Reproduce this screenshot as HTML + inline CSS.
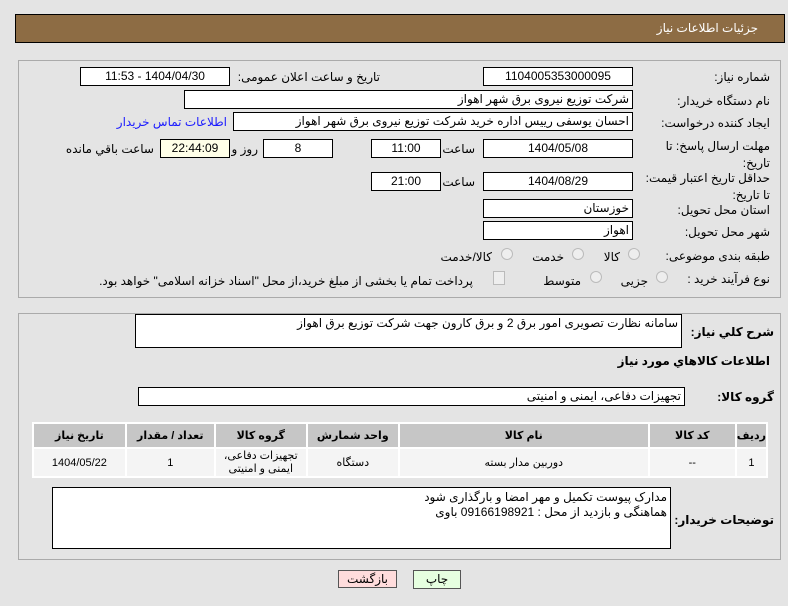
<!DOCTYPE html>
<html><head><meta charset="utf-8"><style>
body{margin:0;width:788px;height:606px;background:#e4e4e4;font-family:"Liberation Sans","DejaVu Sans",sans-serif;font-size:12px;color:#000;position:relative;overflow:hidden;direction:rtl}
.a{position:absolute;white-space:nowrap}
.b{position:absolute;background:#fff;border:1px solid #000;box-sizing:border-box;height:19px;line-height:17px;font-size:12px}
.c{text-align:center}
.r{text-align:right;padding-right:3px}
.l{position:absolute;white-space:nowrap;font-size:12px}
.rad{position:absolute;width:12px;height:12px;border-radius:50%;border:1px solid #bbb;background:#eee;box-sizing:border-box}
table{border-collapse:separate;border-spacing:2px;position:absolute;left:32px;top:422px;width:736px;background:#fff;font-size:11px}
th{background:#c6c6c6;height:23px;font-weight:bold;padding:0}
td{background:#f4f4f4;height:27px;text-align:center;padding:0}
</style></head><body>
<div class="a" style="left:15px;top:14px;width:770px;height:29px;background:#8d6c44;border:1px solid #000;box-sizing:border-box"></div>
<div class="a" style="right:30px;top:21px;color:#fff;font-size:12px">جزئیات اطلاعات نیاز</div>

<div class="a" style="left:18px;top:60px;width:763px;height:238px;border:1px solid #aaa;box-sizing:border-box"></div>
<div class="l" style="right:18px;top:70px">شماره نیاز:</div>
<div class="b c" style="left:483px;top:67px;width:150px">1104005353000095</div>
<div class="l" style="right:408px;top:70px">تاریخ و ساعت اعلان عمومی:</div>
<div class="b c" style="left:80px;top:67px;width:150px">1404/04/30 - 11:53</div>

<div class="l" style="right:18px;top:94px">نام دستگاه خریدار:</div>
<div class="b r" style="left:184px;top:90px;width:449px">شرکت توزیع نیروی برق شهر اهواز</div>

<div class="l" style="right:18px;top:116px">ایجاد کننده درخواست:</div>
<div class="b r" style="left:233px;top:112px;width:400px">احسان یوسفی رییس اداره خرید شرکت توزیع نیروی برق شهر اهواز</div>
<div class="l" style="right:561px;top:115px;color:#1a1aff">اطلاعات تماس خریدار</div>

<div class="l" style="right:18px;top:138px;line-height:17px;white-space:normal;width:120px">مهلت ارسال پاسخ: تا تاریخ:</div>
<div class="b c" style="left:483px;top:139px;width:150px">1404/05/08</div>
<div class="l" style="right:313px;top:142px">ساعت</div>
<div class="b c" style="left:371px;top:139px;width:70px">11:00</div>
<div class="b c" style="left:263px;top:139px;width:70px">8</div>
<div class="l" style="right:530px;top:142px">روز و</div>
<div class="b c" style="left:160px;top:139px;width:70px;background:#ffffe8">22:44:09</div>
<div class="l" style="right:634px;top:142px">ساعت باقي مانده</div>

<div class="l" style="right:18px;top:170px;line-height:17px;white-space:normal;width:125px">حداقل تاریخ اعتبار قیمت: تا تاریخ:</div>
<div class="b c" style="left:483px;top:172px;width:150px">1404/08/29</div>
<div class="l" style="right:313px;top:175px">ساعت</div>
<div class="b c" style="left:371px;top:172px;width:70px">21:00</div>

<div class="l" style="right:18px;top:203px">استان محل تحویل:</div>
<div class="b r" style="left:483px;top:199px;width:150px">خوزستان</div>
<div class="l" style="right:18px;top:225px">شهر محل تحویل:</div>
<div class="b r" style="left:483px;top:221px;width:150px">اهواز</div>

<div class="l" style="right:18px;top:249px">طبقه بندی موضوعی:</div>
<div class="rad" style="left:628px;top:248px"></div><div class="l" style="right:168px;top:250px">کالا</div>
<div class="rad" style="left:572px;top:248px"></div><div class="l" style="right:224px;top:250px">خدمت</div>
<div class="rad" style="left:501px;top:248px"></div><div class="l" style="right:296px;top:250px">کالا/خدمت</div>

<div class="l" style="right:18px;top:272px">نوع فرآیند خرید :</div>
<div class="rad" style="left:656px;top:271px"></div><div class="l" style="right:140px;top:274px">جزیی</div>
<div class="rad" style="left:590px;top:271px"></div><div class="l" style="right:207px;top:274px">متوسط</div>
<div class="a" style="left:493px;top:271px;width:10px;height:12px;border:1px solid #bbb;background:#eee"></div>
<div class="l" style="right:315px;top:274px">پرداخت تمام یا بخشی از مبلغ خرید،از محل "اسناد خزانه اسلامی" خواهد بود.</div>

<div class="a" style="left:18px;top:313px;width:763px;height:247px;border:1px solid #aaa;box-sizing:border-box"></div>
<div class="l" style="right:14px;top:325px;font-weight:bold;font-size:12px">شرح کلي نياز:</div>
<div class="b r" style="left:135px;top:314px;width:547px;height:34px">سامانه نظارت تصویری امور برق 2 و برق کارون جهت شرکت توزیع برق اهواز</div>
<div class="l" style="right:18px;top:354px;font-weight:bold">اطلاعات کالاهاي مورد نياز</div>
<div class="l" style="right:14px;top:390px;font-weight:bold;font-size:12px">گروه کالا:</div>
<div class="b r" style="left:138px;top:387px;width:547px">تجهیزات دفاعی، ایمنی و امنیتی</div>

<table><tr><th style="width:26px">ردیف</th><th style="width:85px">کد کالا</th><th style="width:248px">نام کالا</th><th style="width:90px">واحد شمارش</th><th style="width:90px">گروه کالا</th><th style="width:87px">تعداد / مقدار</th><th>تاریخ نیاز</th></tr>
<tr><td>1</td><td>--</td><td>دوربین مدار بسته</td><td>دستگاه</td><td style="line-height:13px">تجهیزات دفاعی،<br>ایمنی و امنیتی</td><td>1</td><td>1404/05/22</td></tr></table>

<div class="l" style="right:14px;top:513px;font-weight:bold;font-size:12px">توضیحات خریدار:</div>
<div class="b r" style="left:52px;top:487px;width:619px;height:62px;line-height:15px;white-space:normal;padding-top:2px">مدارک پیوست تکمیل و مهر امضا و بارگذاری شود<br>هماهنگی و بازدید از محل :  09166198921  باوی</div>

<div class="a c" style="left:338px;top:570px;width:59px;height:18px;background:#ffdcdc;border:1px solid #555;box-sizing:border-box;line-height:16px">بازگشت</div>
<div class="a c" style="left:413px;top:570px;width:48px;height:19px;background:#e6ffe0;border:1px solid #555;box-sizing:border-box;line-height:17px">چاپ</div>
</body></html>
